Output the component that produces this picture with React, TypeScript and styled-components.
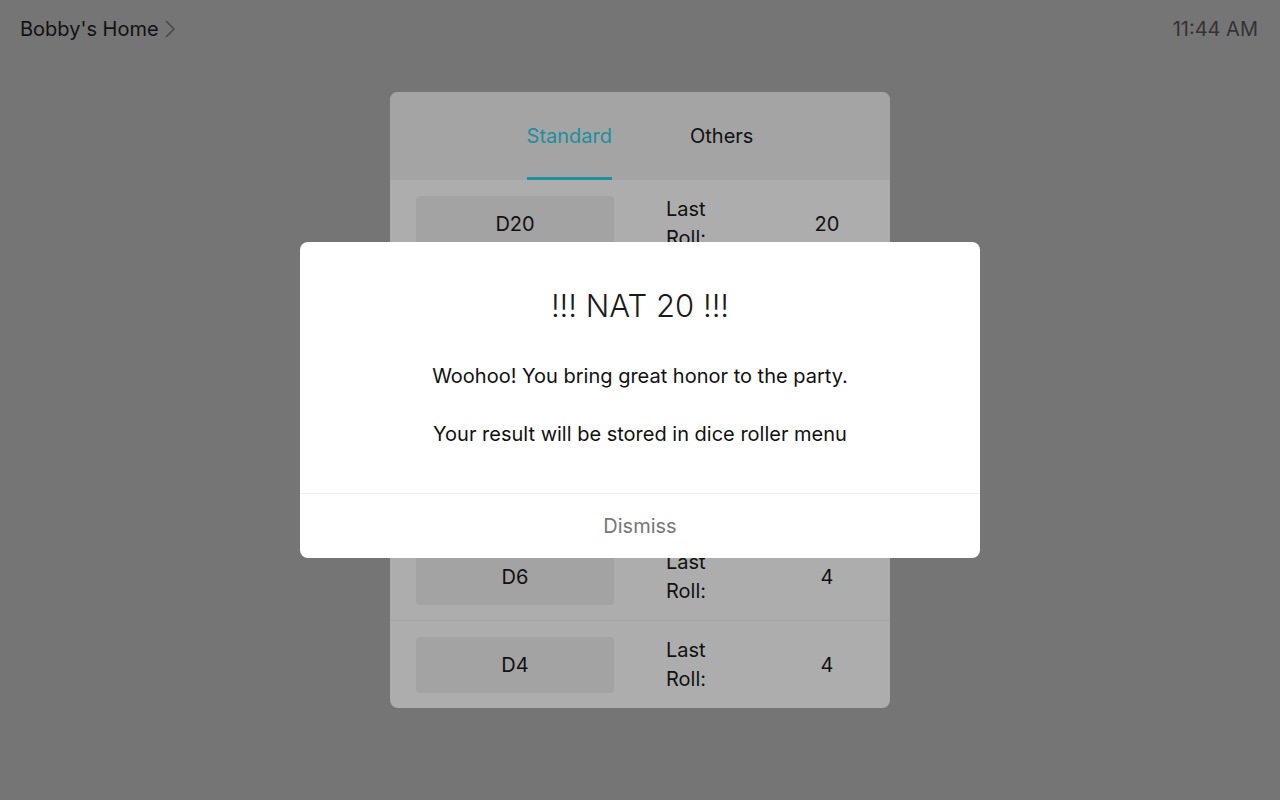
import React from 'react';
import styled, { createGlobalStyle } from 'styled-components';

const GlobalStyle = createGlobalStyle`
  html, body {
    margin: 0;
    padding: 0;
    background: #757575;
    font-family: Inter, "Liberation Sans", sans-serif;
    color: #111;
  }
  * {
    box-sizing: border-box;
  }
`;

const Page = styled.div`
  position: relative;
  width: 1280px;
  height: 800px;
  background: #757575;
  overflow: hidden;
`;

const TopBar = styled.header`
  display: flex;
  align-items: center;
  justify-content: space-between;
  height: 58px;
  padding: 0 22px 0 20px;
`;

const Crumb = styled.div`
  display: flex;
  align-items: center;
  gap: 5px;
  font-size: 20px;
  color: #111;
`;

const Clock = styled.div`
  font-size: 20px;
  color: #333;
`;

const Panel = styled.section`
  width: 500px;
  margin: 34px auto 0;
  border-radius: 8px;
  overflow: hidden;
  background: #adadad;
`;

const Tabs = styled.nav`
  display: flex;
  justify-content: center;
  gap: 78px;
  height: 88px;
  background: #a4a4a4;
`;

const Tab = styled.div<{ $active?: boolean }>`
  display: flex;
  align-items: center;
  font-size: 20px;
  color: ${(p) => (p.$active ? '#1f8e9e' : '#111')};
  border-bottom: 3px solid ${(p) => (p.$active ? '#1f8e9e' : 'transparent')};
  padding-top: 3px;
`;

const Row = styled.div`
  display: grid;
  grid-template-columns: 198px 176px 1fr;
  align-items: center;
  height: 88px;
  padding: 0 26px;
  & + & {
    border-top: 1px solid #a5a5a5;
  }
`;

const DieButton = styled.div`
  display: flex;
  align-items: center;
  justify-content: center;
  height: 56px;
  border-radius: 4px;
  background: #a3a3a3;
  font-size: 20px;
`;

const Label = styled.div`
  width: min-content;
  margin-left: 52px;
  font-size: 20px;
  line-height: 29px;
`;

const Value = styled.div`
  text-align: center;
  font-size: 20px;
`;

const Overlay = styled.div`
  position: absolute;
  inset: 0;
  display: flex;
  align-items: center;
  justify-content: center;
`;

const Modal = styled.div`
  width: 680px;
  border-radius: 8px;
  background: #fff;
  overflow: hidden;
`;

const ModalBody = styled.div`
  display: flex;
  flex-direction: column;
  align-items: center;
  padding: 46px 40px 47px;
`;

const Title = styled.h2`
  margin: 0 0 40px;
  font-size: 31px;
  line-height: 36px;
  font-weight: 300;
  color: #1a1a1a;
`;

const Message = styled.p`
  margin: 0;
  font-size: 20px;
  line-height: 24px;
  & + & {
    margin-top: 34px;
  }
`;

const Footer = styled.div`
  display: flex;
  align-items: center;
  justify-content: center;
  height: 65px;
  border-top: 1px solid #eeeeee;
  font-size: 20px;
  color: #777;
`;

const dice = [
  { name: 'D20', last: 20 },
  { name: 'D12', last: 7 },
  { name: 'D10', last: 3 },
  { name: 'D8', last: 5 },
  { name: 'D6', last: 4 },
  { name: 'D4', last: 4 },
];

export default function App() {
  return (
    <Page>
      <GlobalStyle />
      <TopBar>
        <Crumb>
          Bobby's Home
          <svg width="12" height="20" viewBox="0 0 12 20" fill="none">
            <path d="M2 2l8 8-8 8" stroke="#4a4a4a" strokeWidth="1.6" />
          </svg>
        </Crumb>
        <Clock>11:44 AM</Clock>
      </TopBar>
      <Panel>
        <Tabs>
          <Tab $active>Standard</Tab>
          <Tab>Others</Tab>
        </Tabs>
        {dice.map((d) => (
          <Row key={d.name}>
            <DieButton>{d.name}</DieButton>
            <Label>Last Roll:</Label>
            <Value>{d.last}</Value>
          </Row>
        ))}
      </Panel>
      <Overlay>
        <Modal>
          <ModalBody>
            <Title>!!! NAT 20 !!!</Title>
            <Message>Woohoo! You bring great honor to the party.</Message>
            <Message>Your result will be stored in dice roller menu</Message>
          </ModalBody>
          <Footer>Dismiss</Footer>
        </Modal>
      </Overlay>
    </Page>
  );
}
